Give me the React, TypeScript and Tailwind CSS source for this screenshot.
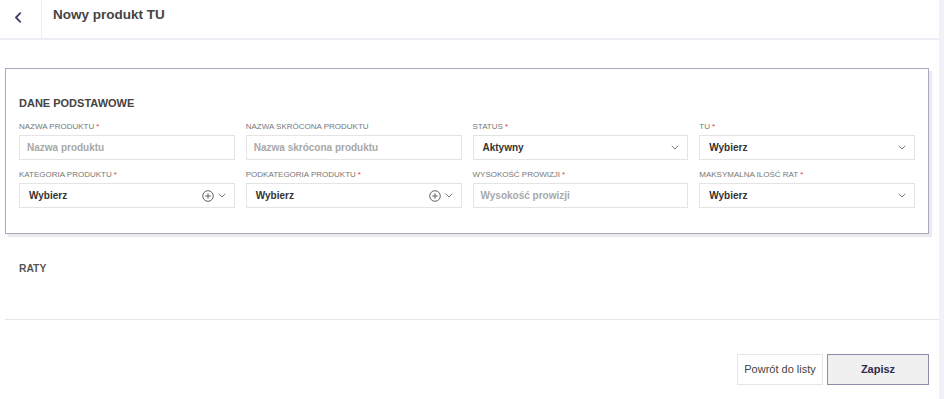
import React from "react";

const font = { fontFamily: '"Liberation Sans", Arial, sans-serif' };

function Chevron() {
  return (
    <svg width="8" height="5" viewBox="0 0 8 5" fill="none" className="shrink-0">
      <path d="M1 1l3 3 3-3" stroke="#7a7a7a" strokeWidth="1" strokeLinecap="round" strokeLinejoin="round" />
    </svg>
  );
}

function PlusCircle() {
  return (
    <svg width="12" height="12" viewBox="0 0 12 12" fill="none" className="shrink-0">
      <circle cx="6" cy="6" r="5.3" stroke="#555" strokeWidth="0.9" />
      <path d="M6 3.2v5.6M3.2 6h5.6" stroke="#555" strokeWidth="0.9" />
    </svg>
  );
}

function Label({ text, required }: { text: string; required?: boolean }) {
  return (
    <div className="h-[12px] mb-[2px] text-[8px] leading-[12px] uppercase text-[#777] whitespace-nowrap">
      {text}
      {required && <span className="text-[#e53935] ml-[2px]">*</span>}
    </div>
  );
}

function Input({ placeholder }: { placeholder: string }) {
  return (
    <div className="h-[25px] border border-[#e4e4e4] flex items-center pl-[7px] text-[10px] font-bold text-[#a8a8a8] bg-white">
      {placeholder}
    </div>
  );
}

function Select({ value, plus }: { value: string; plus?: boolean }) {
  return (
    <div className="h-[25px] border border-[#e4e4e4] flex items-center pl-[9px] pr-[8px] text-[10px] font-bold text-[#333] bg-white">
      <span className="flex-1">{value}</span>
      {plus && (
        <span className="mr-[4px] flex items-center">
          <PlusCircle />
        </span>
      )}
      <Chevron />
    </div>
  );
}

function Field({ label, required, children }: { label: string; required?: boolean; children: React.ReactNode }) {
  return (
    <div className="flex flex-col">
      <Label text={label} required={required} />
      {children}
    </div>
  );
}

export default function App() {
  return (
    <div className="flex w-[944px] h-[399px] bg-white overflow-hidden" style={font}>
      <div className="flex-1 flex flex-col min-w-0">
        <header className="h-[40px] flex border-b-[2px] border-[#ededf5] shrink-0">
          <div className="w-[42px] border-r border-[#eeeef2] flex pl-[14px] pt-[12px]">
            <svg width="8" height="11" viewBox="0 0 8 11" fill="none">
              <path d="M6.2 1.2L2 5.5l4.2 4.3" stroke="#3f3d63" strokeWidth="1.8" strokeLinecap="round" strokeLinejoin="round" />
            </svg>
          </div>
          <div className="pl-[11px] pt-[5px] text-[13.5px] leading-[20px] font-bold text-[#444]">Nowy produkt TU</div>
        </header>

        <div className="ml-[5px] mr-[10px] mt-[28px] border border-[#a9a8c1] bg-white shadow-[3px_3px_1px_rgba(0,0,0,0.08)] px-[13px] pt-[26px] pb-[25px]">
          <div className="text-[11px] leading-[16px] font-bold text-[#444] mb-[10px]">DANE PODSTAWOWE</div>
          <div className="grid grid-cols-4 gap-x-[11px] gap-y-[9px]">
            <Field label="Nazwa produktu" required>
              <Input placeholder="Nazwa produktu" />
            </Field>
            <Field label="Nazwa skrócona produktu">
              <Input placeholder="Nazwa skrócona produktu" />
            </Field>
            <Field label="Status" required>
              <Select value="Aktywny" />
            </Field>
            <Field label="TU" required>
              <Select value="Wybierz" />
            </Field>
            <Field label="Kategoria produktu" required>
              <Select value="Wybierz" plus />
            </Field>
            <Field label="Podkategoria produktu" required>
              <Select value="Wybierz" plus />
            </Field>
            <Field label="Wysokość prowizji" required>
              <Input placeholder="Wysokość prowizji" />
            </Field>
            <Field label="Maksymalna ilość rat" required>
              <Select value="Wybierz" />
            </Field>
          </div>
        </div>

        <div className="pl-[19px] mt-[28px] text-[10.3px] leading-[14px] font-bold text-[#555]">RATY</div>

        <div className="ml-[5px] mt-[43px] border-t border-[#e6e6e6]" />

        <div className="flex justify-end gap-[4px] mr-[10px] mt-[34px]">
          <button className="h-[31px] w-[86px] border border-[#e6e6e6] bg-white text-[11px] text-[#444]">
            Powrót do listy
          </button>
          <button className="h-[31px] w-[102px] border border-[#8e8cab] bg-[#f0f0f0] text-[11px] font-bold text-[#2e2c4f]">
            Zapisz
          </button>
        </div>
      </div>
      <div className="w-[5px] bg-[#f1f1f7] shrink-0" />
    </div>
  );
}
